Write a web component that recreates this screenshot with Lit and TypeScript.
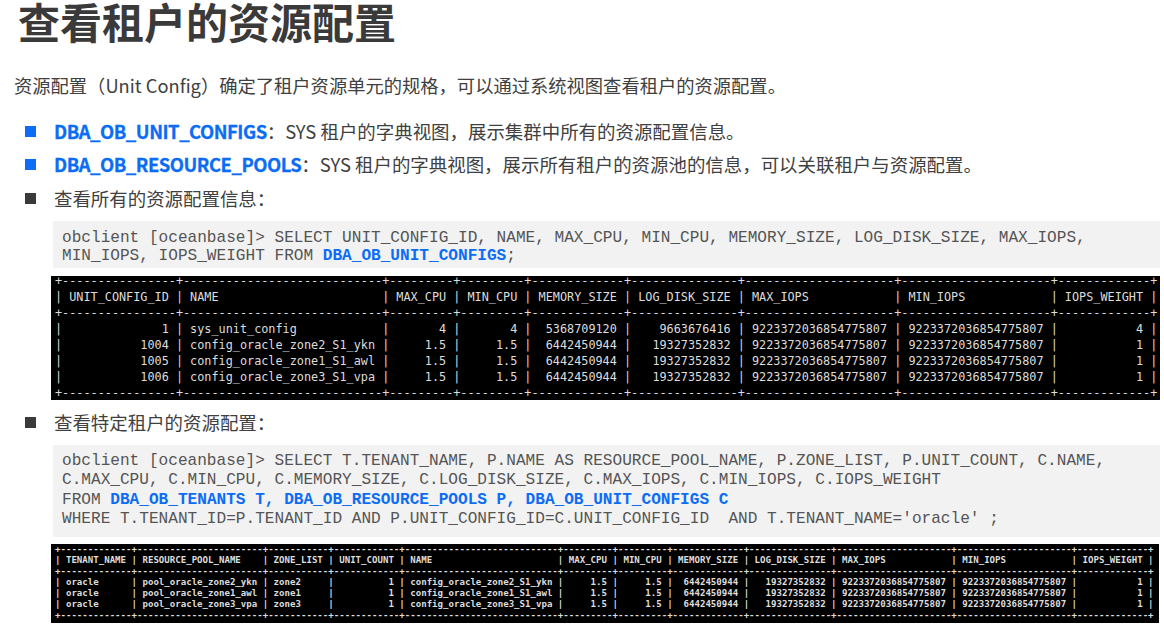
import { LitElement, html, css } from "lit";
import { customElement } from "lit/decorators.js";

type Row = (string | number)[];

function table(widths: number[], numeric: boolean[], head: string[], rows: Row[]): string {
  const rule = "+" + widths.map((w) => "-".repeat(w + 2)).join("+") + "+";
  const line = (cells: Row, isHead: boolean) =>
    "| " +
    cells
      .map((c, i) => {
        const s = String(c);
        return !isHead && numeric[i] ? s.padStart(widths[i]) : s.padEnd(widths[i]);
      })
      .join(" | ") +
    " |";
  return [rule, line(head, true), rule, ...rows.map((r) => line(r, false)), rule].join("\n");
}

const MAXI = "9223372036854775807";

const table1 = table(
  [14, 26, 7, 7, 11, 13, 19, 19, 11],
  [true, false, true, true, true, true, false, false, true],
  ["UNIT_CONFIG_ID", "NAME", "MAX_CPU", "MIN_CPU", "MEMORY_SIZE", "LOG_DISK_SIZE", "MAX_IOPS", "MIN_IOPS", "IOPS_WEIGHT"],
  [
    [1, "sys_unit_config", 4, 4, 5368709120, 9663676416, MAXI, MAXI, 4],
    [1004, "config_oracle_zone2_S1_ykn", 1.5, 1.5, 6442450944, 19327352832, MAXI, MAXI, 1],
    [1005, "config_oracle_zone1_S1_awl", 1.5, 1.5, 6442450944, 19327352832, MAXI, MAXI, 1],
    [1006, "config_oracle_zone3_S1_vpa", 1.5, 1.5, 6442450944, 19327352832, MAXI, MAXI, 1],
  ]
);

const table2 = table(
  [11, 21, 9, 10, 26, 7, 7, 11, 13, 19, 19, 11],
  [false, false, false, true, false, true, true, true, true, false, false, true],
  ["TENANT_NAME", "RESOURCE_POOL_NAME", "ZONE_LIST", "UNIT_COUNT", "NAME", "MAX_CPU", "MIN_CPU", "MEMORY_SIZE", "LOG_DISK_SIZE", "MAX_IOPS", "MIN_IOPS", "IOPS_WEIGHT"],
  [
    ["oracle", "pool_oracle_zone2_ykn", "zone2", 1, "config_oracle_zone2_S1_ykn", 1.5, 1.5, 6442450944, 19327352832, MAXI, MAXI, 1],
    ["oracle", "pool_oracle_zone1_awl", "zone1", 1, "config_oracle_zone1_S1_awl", 1.5, 1.5, 6442450944, 19327352832, MAXI, MAXI, 1],
    ["oracle", "pool_oracle_zone3_vpa", "zone3", 1, "config_oracle_zone3_S1_vpa", 1.5, 1.5, 6442450944, 19327352832, MAXI, MAXI, 1],
  ]
);

@customElement("app-root")
export class AppRoot extends LitElement {
  static styles = css`
    :host {
      display: block;
      width: 1164px;
      height: 636px;
      overflow: hidden;
      background: #fff;
      color: #404040;
      font-family: "Noto Sans CJK SC", "Noto Sans", sans-serif;
    }
    h1 {
      margin: 0;
      padding-left: 18px;
      font-size: 42px;
      line-height: 42px;
      font-weight: 700;
      color: #3a3a3a;
    }
    .intro {
      margin: 30px 0 0;
      padding-left: 14px;
      font-size: 18.3px;
      line-height: 26px;
    }
    .item {
      display: flex;
      align-items: center;
      gap: 18px;
      margin-left: 25px;
      font-size: 18.45px;
      line-height: 26px;
    }
    .item i {
      flex: none;
      width: 11px;
      height: 11px;
      background: #0b6cf5;
    }
    .item.dark i {
      background: #3a3a3a;
    }
    .item b {
      color: #0b6cf5;
      font-weight: 700;
      letter-spacing: -0.48px;
      -webkit-text-stroke: 0.3px #0b6cf5;
    }
    .blue1 {
      margin-top: 20px;
    }
    .blue2 {
      margin-top: 7px;
    }
    .dark1 {
      margin-top: 8px;
    }
    .dark2 {
      margin-top: 9px;
    }
    .code {
      margin: 10px 4px 0 53px;
      padding: 8px 0 3px 9px;
      background: #f2f2f2;
      color: #555;
      font-family: "Liberation Mono", "Courier New", monospace;
      font-size: 16.1px;
      line-height: 18px;
      white-space: pre;
    }
    .code.tall {
      line-height: 19.3px;
      padding: 7px 0 8px 9px;
    }
    .code b {
      color: #0b6cf5;
    }
    .term {
      display: flow-root;
      background: #000;
      color: #ddd;
      font-family: "DejaVu Sans Mono", monospace;
      white-space: pre;
    }
    .term span {
      display: block;
    }
    .t1 {
      margin: 8px 4px 0 51px;
      height: 124px;
      padding-left: 4px;
      font-size: 11.82px;
      line-height: 16px;
    }
    .t1 span {
      margin-top: -3px;
    }
    .t2 {
      margin: 7px 5px 0 51px;
      padding: 0 0 2px 4px;
      font-size: 9.09px;
      font-weight: 700;
      line-height: 11px;
    }
  `;

  render() {
    return html`
      <h1>查看租户的资源配置</h1>
      <p class="intro">资源配置（Unit Config）确定了租户资源单元的规格，可以通过系统视图查看租户的资源配置。</p>
      <div class="item blue1"><i></i><span><b>DBA_OB_UNIT_CONFIGS</b>：SYS 租户的字典视图，展示集群中所有的资源配置信息。</span></div>
      <div class="item blue2"><i></i><span><b>DBA_OB_RESOURCE_POOLS</b>：SYS 租户的字典视图，展示所有租户的资源池的信息，可以关联租户与资源配置。</span></div>
      <div class="item dark dark1"><i></i><span>查看所有的资源配置信息：</span></div>
      <div class="code">obclient [oceanbase]&gt; SELECT UNIT_CONFIG_ID, NAME, MAX_CPU, MIN_CPU, MEMORY_SIZE, LOG_DISK_SIZE, MAX_IOPS,
MIN_IOPS, IOPS_WEIGHT FROM <b>DBA_OB_UNIT_CONFIGS</b>;</div>
      <div class="term t1"><span>${table1}</span></div>
      <div class="item dark dark2"><i></i><span>查看特定租户的资源配置：</span></div>
      <div class="code tall">obclient [oceanbase]&gt; SELECT T.TENANT_NAME, P.NAME AS RESOURCE_POOL_NAME, P.ZONE_LIST, P.UNIT_COUNT, C.NAME,
C.MAX_CPU, C.MIN_CPU, C.MEMORY_SIZE, C.LOG_DISK_SIZE, C.MAX_IOPS, C.MIN_IOPS, C.IOPS_WEIGHT
FROM <b>DBA_OB_TENANTS T, DBA_OB_RESOURCE_POOLS P, DBA_OB_UNIT_CONFIGS C</b>
WHERE T.TENANT_ID=P.TENANT_ID AND P.UNIT_CONFIG_ID=C.UNIT_CONFIG_ID  AND T.TENANT_NAME='oracle' ;</div>
      <div class="term t2"><span>${table2}</span></div>
    `;
  }
}
